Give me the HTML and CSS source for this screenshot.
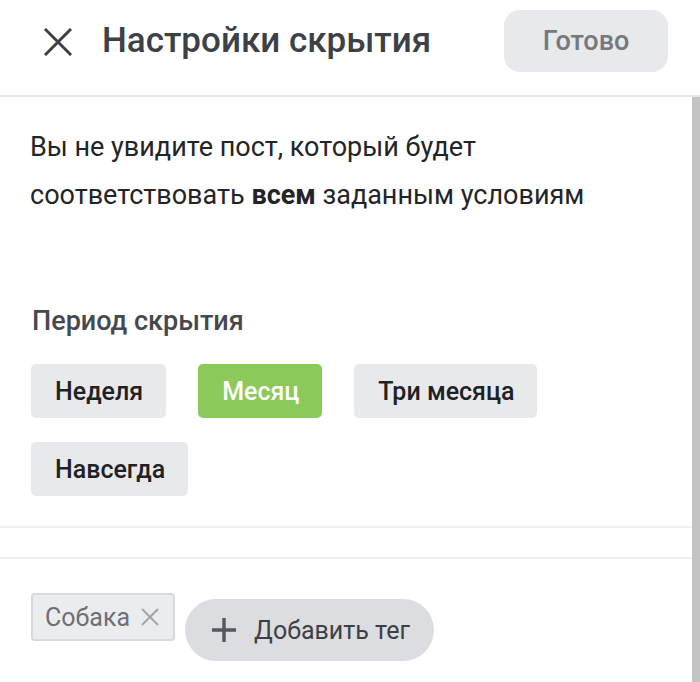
FILE: index.html
```html
<!DOCTYPE html>
<html lang="ru">
<head>
<meta charset="utf-8">
<link rel="stylesheet" href="styles.css">
</head>
<body>
<header class="header">
  <svg class="close" width="28" height="28" viewBox="0 0 28 28"><path d="M2 2L26 26M26 2L2 26" stroke="#3d4046" stroke-width="3" stroke-linecap="square"/></svg>
  <h1 class="title">Настройки скрытия</h1>
  <button class="done">Готово</button>
</header>
<div class="wrap">
  <main class="main">
    <p class="intro">Вы не увидите пост, который будет соответствовать <b>всем</b> заданным условиям</p>
    <h2 class="label">Период скрытия</h2>
    <div class="chips">
      <span class="chip">Неделя</span>
      <span class="chip active">Месяц</span>
      <span class="chip">Три месяца</span>
      <span class="chip">Навсегда</span>
    </div>
    <div class="divider"></div>
    <div class="divider second"></div>
    <div class="tags">
      <span class="tag">Собака<svg class="tag-x" width="18" height="18" viewBox="0 0 18 18"><path d="M1 1L17 17M17 1L1 17" stroke="#a3a5a9" stroke-width="2"/></svg></span>
      <button class="add"><svg class="plus" width="24" height="24" viewBox="0 0 24 24"><path d="M12 0V24M0 12H24" stroke="#55585d" stroke-width="3.5"/></svg>Добавить тег</button>
    </div>
  </main>
  <div class="scrollbar"></div>
</div>
</body>
</html>
```
FILE: styles.css
```css
* { box-sizing: border-box; }
html, body { margin: 0; padding: 0; background: #fff; }
body {
  font-family: Roboto, "Noto Sans", sans-serif;
  width: 700px;
  height: 682px;
  overflow: hidden;
}
.header {
  height: 97px;
  display: flex;
  align-items: center;
  padding: 0 32px 0 44px;
  border-bottom: 2px solid #e6e6e8;
}
.close { flex: none; margin-top: -12px; }
.title {
  margin: 0 0 0 30px;
  font-size: 35px;
  font-weight: 500;
  color: #3d4046;
  flex: 1;
  margin-top: -14px;
  white-space: nowrap;
}
.done {
  width: 164px;
  height: 62px;
  border: 0;
  border-radius: 16px;
  background: #e8e9eb;
  color: #75787d;
  font-family: inherit;
  font-size: 27px;
  font-weight: 500;
  margin-top: -13px;
  flex: none;
}
.wrap {
  display: flex;
  height: 585px;
}
.main { flex: 1; }
.scrollbar { width: 8px; background: #c4c4c4; }
.intro {
  margin: 0;
  padding: 26px 20px 0 30px;
  font-size: 27px;
  line-height: 48px;
  color: #222427;
}
.intro b { font-weight: 700; }
.label {
  margin: 87px 0 0 32px;
  font-size: 27px;
  line-height: 30px;
  font-weight: 500;
  color: #45484d;
}
.chips {
  display: flex;
  flex-wrap: wrap;
  gap: 24px 32px;
  padding: 28px 120px 0 31px;
}
.chip {
  height: 54px;
  padding: 0 23px 0 24px;
  display: flex;
  align-items: center;
  background: #e8e9eb;
  border-radius: 5px;
  font-size: 25px;
  font-weight: 500;
  color: #1f2124;
}
.chip.active { background: #8bc95b; color: #fff; }
.divider {
  height: 2px;
  background: #f0f0f1;
  margin-top: 30px;
}
.divider.second { margin-top: 29px; }
.tags {
  display: flex;
  align-items: flex-start;
  gap: 10px;
  padding: 34px 0 0 31px;
}
.tag {
  height: 48px;
  display: flex;
  align-items: center;
  padding: 0 14px 0 12px;
  background: #ebecee;
  border: 2px solid #d8d9dc;
  border-radius: 4px;
  font-size: 25px;
  color: #6c6f74;
}
.tag-x { margin-left: 11px; }
.add {
  margin-top: 6px;
  height: 62px;
  display: flex;
  align-items: center;
  padding: 0 24px 0 27px;
  border: 0;
  border-radius: 31px;
  background: #dcdde0;
  font-family: inherit;
  font-size: 25px;
  color: #3c3f44;
}
.plus { margin-right: 18px; }
```
